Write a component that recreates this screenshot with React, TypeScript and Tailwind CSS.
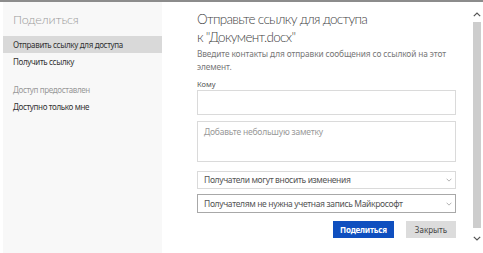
import React from "react";

const Chevron = ({ className = "", up = false }: { className?: string; up?: boolean }) => (
  <svg width="8" height="5" viewBox="0 0 8 5" className={className}>
    <polyline
      points={up ? "0.8,4.2 4,1 7.2,4.2" : "0.8,0.8 4,4 7.2,0.8"}
      fill="none"
      stroke="currentColor"
      strokeWidth="1.2"
    />
  </svg>
);

const Select = ({ label, dark = false }: { label: string; dark?: boolean }) => (
  <div
    className={`flex items-center justify-between h-full border ${dark ? "border-[#a8a8a8]" : "border-[#dadada]"} bg-white pl-[6px] pr-[3px]`}
  >
    <span className="text-[8.5px] leading-[12px] text-[#555] tracking-[-0.35px]">{label}</span>
    <Chevron className="text-[#aaa] w-[6px] h-[4px]" />
  </div>
);

export default function App() {
  return (
    <div
      className="w-[483px] h-[253px] bg-white flex flex-col overflow-hidden leading-none"
      style={{ fontFamily: '"Noto Sans", "Open Sans", sans-serif' }}
    >
      <div className="h-[2px] bg-[#8c8c8c] shrink-0" />
      <div className="flex flex-1 min-h-0">
        <aside className="w-[159px] ml-[3px] bg-[#f8f8f8] pt-[9px] shrink-0">
          <div
            className="h-[18px] leading-[18px] pl-[10px] text-[12.5px] font-light text-[#9a9a9a] tracking-[-0.2px]"
            style={{ fontFamily: 'Lato, "Noto Sans", sans-serif' }}
          >
            Поделиться
          </div>
          <div className="mt-[7px] h-[17px] flex items-center pl-[10px] bg-[#d9d9d9] text-[8px] text-[#333] tracking-[-0.35px]">
            Отправить ссылку для доступа
          </div>
          <div className="h-[17px] flex items-center pl-[10px] text-[8px] text-[#333] tracking-[-0.35px]">
            Получить ссылку
          </div>
          <div className="mt-[11px] h-[17px] flex items-center pl-[10px] text-[8px] text-[#999] tracking-[-0.35px]">
            Доступ предоставлен
          </div>
          <div className="h-[17px] flex items-center pl-[10px] text-[8px] text-[#333] tracking-[-0.35px]">
            Доступно только мне
          </div>
        </aside>

        <main className="flex-1 pl-[35px] pt-[8px]">
          <div className="w-[259px]">
            <div
              className="text-[13.5px] leading-[18px] font-light text-[#444] tracking-[-0.7px]"
              style={{ fontFamily: 'Lato, "Noto Sans", sans-serif' }}
            >
              Отправьте ссылку для доступа
              <br />к "Документ.docx"
            </div>
            <div className="mt-[1px] text-[8.3px] leading-[13px] text-[#777] tracking-[-0.1px]">
              Введите контакты для отправки сообщения со ссылкой на этот элемент.
            </div>
            <div className="mt-[6px] h-[11px] leading-[11px] text-[7.5px] text-[#555]">Кому</div>
            <div className="h-[25px] border border-[#dadada] bg-white" />
            <div className="mt-[6px] h-[41px] border border-[#dadada] bg-white px-[6px] pt-[4px]">
              <div className="text-[8.5px] leading-[12px] text-[#999] tracking-[-0.2px]">
                Добавьте небольшую заметку
              </div>
            </div>
            <div className="mt-[9px] h-[18px]">
              <Select label="Получатели могут вносить изменения" />
            </div>
            <div className="mt-[5px] h-[19px]">
              <Select label="Получателям не нужна учетная запись Майкрософт" dark />
            </div>
            <div className="mt-[8px] flex justify-end gap-[12px]">
              <button className="w-[61px] h-[17px] bg-[#0f4fbf] text-white text-[8px] leading-none font-bold flex items-center justify-center tracking-[-0.2px]">
                Поделиться
              </button>
              <button className="w-[50px] h-[17px] bg-[#dcdcdc] text-[#444] text-[8px] leading-none flex items-center justify-center">
                Закрыть
              </button>
            </div>
          </div>
        </main>

        <div className="w-[10px] mr-[1px] flex flex-col items-center shrink-0">
          <div className="h-[20px] pt-[4px] flex items-center justify-center text-[#555]">
            <Chevron up />
          </div>
          <div className="h-[206px] w-[8px] bg-[#cdcdcd]" />
          <div className="h-[20px] flex items-center justify-center text-[#555]">
            <Chevron />
          </div>
        </div>
      </div>
    </div>
  );
}
